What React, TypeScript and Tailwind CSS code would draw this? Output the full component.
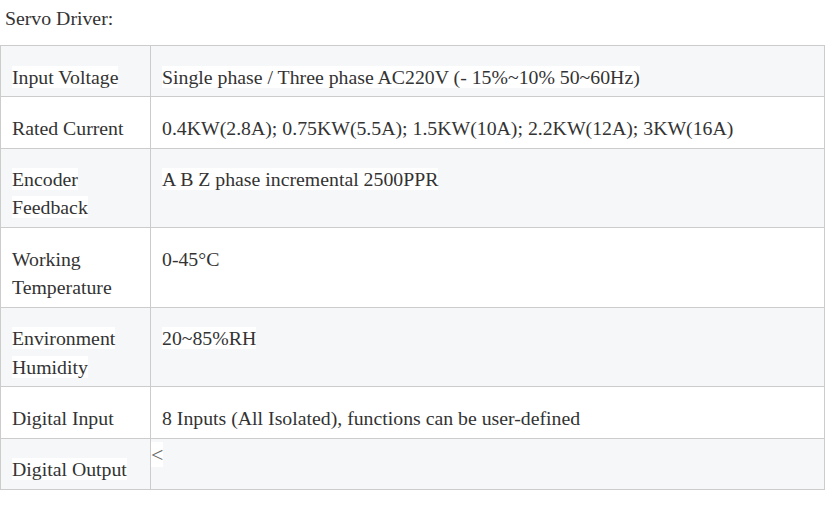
const rows: { label: string[]; value: string }[] = [
  { label: ["Input Voltage"], value: "Single phase / Three phase AC220V (- 15%~10% 50~60Hz)" },
  { label: ["Rated Current"], value: "0.4KW(2.8A); 0.75KW(5.5A); 1.5KW(10A); 2.2KW(12A); 3KW(16A)" },
  { label: ["Encoder", "Feedback"], value: "A B Z phase incremental 2500PPR" },
  { label: ["Working", "Temperature"], value: "0-45°C" },
  { label: ["Environment", "Humidity"], value: "20~85%RH" },
  { label: ["Digital Input"], value: "8 Inputs (All Isolated), functions can be user-defined" },
];

export default function App() {
  return (
    <div className="h-[505px] w-[835px] bg-white font-['Liberation_Serif',serif] text-[19.8px] text-[#333333]">
      <p className="pl-[5px] pt-[4px] leading-[28px]">Servo Driver:</p>
      <table className="mt-[13px] w-[825px] border-collapse leading-[28.3px]">
        <tbody>
          {rows.map((row, i) => (
            <tr key={i} className={i % 2 === 0 ? "bg-[#f6f7f9]" : "bg-white"}>
              <td className="w-[150px] border border-[#cccccc] px-[11px] pt-[16.5px] pb-[5.5px] align-top">
                {row.label.map((l, j) => (
                  <div key={j}>
                    <span className="bg-white">{l}</span>
                  </div>
                ))}
              </td>
              <td className="border border-[#cccccc] px-[11px] pt-[16.5px] pb-[5.5px] align-top">
                <span className="bg-white">{row.value}</span>
              </td>
            </tr>
          ))}
          <tr className="bg-[#f6f7f9]">
            <td className="w-[150px] border border-[#cccccc] px-[11px] pt-[16.5px] pb-[5.5px] align-top">
              <span className="bg-white">Digital Output</span>
            </td>
            <td className="border border-[#cccccc] p-0 pt-[2px] align-top">
              <span className="bg-white text-[22px] text-[#666666]">&lt;</span>
            </td>
          </tr>
        </tbody>
      </table>
    </div>
  );
}
